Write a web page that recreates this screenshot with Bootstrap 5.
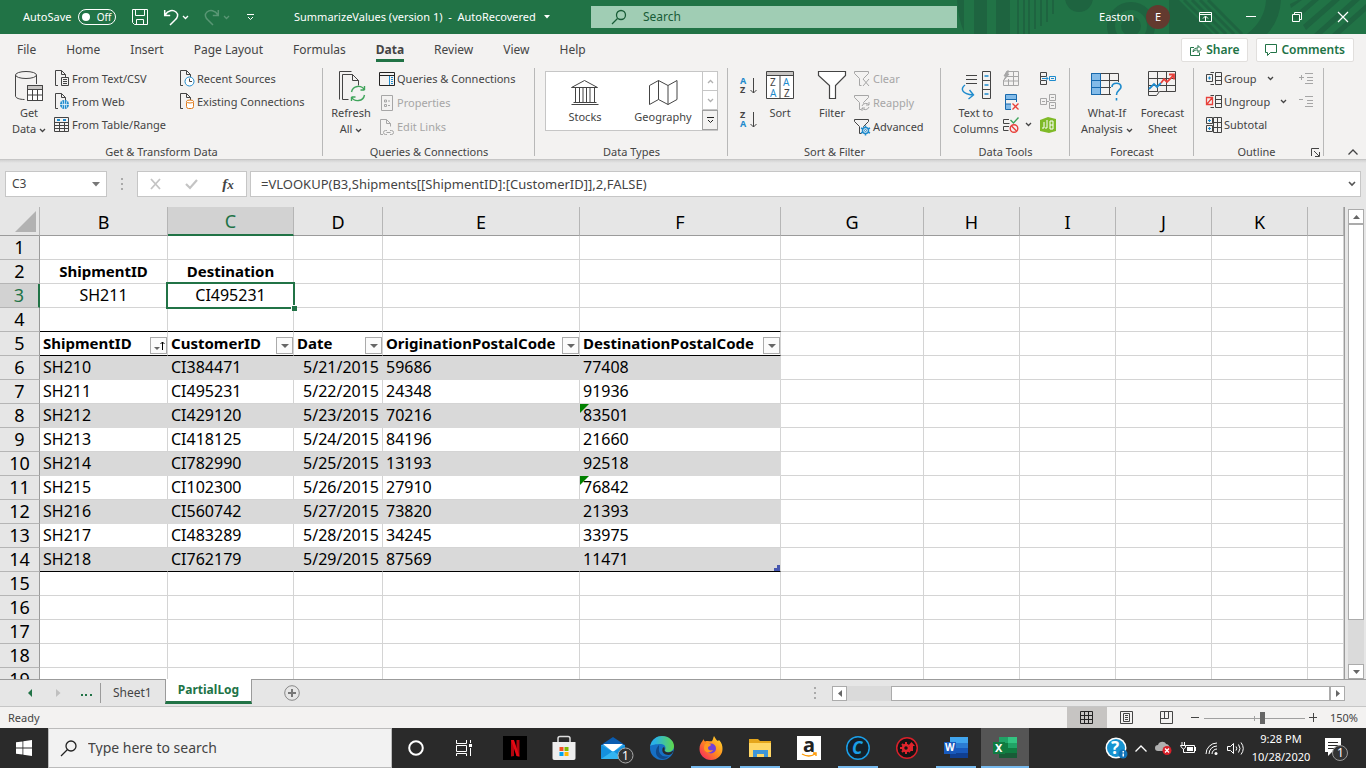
<!DOCTYPE html>
<html lang="en">
<head>
<meta charset="utf-8">
<meta name="viewport" content="width=device-width, initial-scale=1">
<title>SummarizeValues (version 1) - Excel</title>
<link href="https://cdn.jsdelivr.net/npm/bootstrap@5.3.0/dist/css/bootstrap.min.css" rel="stylesheet">
<style>
:root{--xl:#217346;--ink:#444;--dim:#a6a6a6;--blue:#1e8bcd}
body{font-family:"Noto Sans","Open Sans",sans-serif;font-size:11px;line-height:16px;color:var(--ink);background:#e6e6e6}
body>*{flex:none}
button{font:inherit;color:inherit;background:none;border:0;padding:0}
svg{display:block;flex:none;overflow:visible}
.ln{fill:none;stroke:currentColor}
/* title bar */
.titlebar{height:34px;background:var(--xl);color:#fff;position:relative}
.titlebar>*{position:relative}
.titlebar>.deco{position:absolute;right:0;top:0;height:34px;width:426px;overflow:hidden}
.quick{width:294px;padding-left:23px}
.pill{width:38px;height:16px;border:1px solid #fff;border-radius:8px;font-size:10px;line-height:14px;padding:0 4px 0 3px;margin-left:7px}
.pill i{width:8px;height:8px;border-radius:50%;background:#fff}
.doc{width:297px}
.find{flex:0 1 366px;height:22px;background:#a0cdb4;color:#185c37}
.find input{background:none;border:0;outline:0;font-size:12px;color:#185c37;width:100%;padding:0}
.find input::placeholder{color:#185c37;opacity:1}
.avatar{width:24px;height:24px;border-radius:50%;background:#633a2f;font-size:11px}
.win{width:46px;height:34px}
/* ribbon */
.ribbon{background:#f3f2f1}
.tabs{height:32px;font-size:12px;padding-left:17px;padding-right:12px}
.tabs a{color:var(--ink);text-decoration:none;height:28px;line-height:31px;white-space:nowrap;margin-right:30px}
.tabs a.on{font-weight:700;border-bottom:3px solid var(--xl)}
.share{height:24px;background:#fff;border:1px solid #e1dfdd;border-radius:2px;color:var(--xl);font-weight:600;font-size:12px;padding:0 8px}
.tools{height:94px;border-bottom:1px solid #c6c6c6}
.grp{position:relative;height:94px;flex:none}
.grp::after{content:"";position:absolute;right:0;top:2px;height:88px;width:1px;background:#b8b8b8}
.grp>.body{height:78px;padding-top:1px}
.g1{width:323px}.g2{width:212px}.g3{width:193px}.g4{width:213px}.g5{width:129px}.g6{width:124px}.g7{width:130px}
.g6>.body{padding-left:11px}
.big{padding-top:3px;white-space:nowrap;text-align:center;align-self:flex-start}
.big svg{margin:0 auto 2px}
.getdata{width:54px;padding-left:4px}.refresh{width:56px}.source{width:126px}
.r23>*{height:23px}.r24>*{height:24px}
.lab{display:flex;align-items:center;gap:2px;white-space:nowrap}
.off{color:var(--dim)}
.big svg.chev{display:inline-block;margin:0}
.flip{transform:scaleY(-1)}
.detail{margin-right:11px}
.gallery{width:173px;height:60px;border:1px solid #c6c6c6;background:#fff}
.gallery .kind{flex:1 1 0}
.gallery .spin{width:15px;border-left:1px solid #c6c6c6}
.spin button{height:19px;border-bottom:1px solid #c6c6c6;color:#b0b0b0}
.spin button:last-child{height:20px;border:1px solid #a0a0a0;margin:0 -1px -1px;background:#f3f2f1;color:#222}
/* formula bar */
.fbar{height:47px;background:linear-gradient(#d2d2d2,#e6e6e6 3px);padding:11px 5px 10px}
.fbox{background:#fff;border:1px solid #c6c6c6;height:26px}
.fbox input{border:0;outline:0;background:none;color:var(--ink);width:100%;padding:0;font-size:12px}
.namebox{width:102px;padding:0 6px}.fbtns{width:110px;margin-right:3px}
.fdots{margin:0 14px}
.formula input{font-size:13px;padding-left:10px}
.fx{font:italic 700 15px "Liberation Serif",serif}
/* sheet */
.sheet{flex:1 1 0;overflow:hidden;min-height:0}
.pane{overflow:hidden;min-width:0;background:#fff;border-right:1px solid #9b9b9b}
.cells{table-layout:fixed;width:100%;border-collapse:separate;border-spacing:0;color:#000;font-size:15px}
.c0{width:40px}.c1{width:128px}.c2{width:126px}.c3{width:89px}.c4{width:197px}.c5{width:201px}.c6{width:143px}.c7{width:96px}
.cells td,.cells th{height:24px;line-height:23px;padding:0 3px;border:0 solid #d4d4d4;border-width:0 1px 1px 0;white-space:nowrap;position:relative}
.cells td:not(.fw-bold){font-size:16px}
.cells thead th{height:29px;line-height:26px;background:#e6e6e6;border-color:#b5b5b5;border-bottom-color:#9b9b9b;text-align:center;font-size:18px;font-weight:400;padding-top:1px}
.cells tbody th[scope=row]{background:#e6e6e6;border-color:#b5b5b5;border-right-color:#9b9b9b;text-align:center;font-size:18px;font-weight:400;padding:0}
.cells thead th.sel{background:#d2d2d2;color:var(--xl);border-bottom:2px solid var(--xl)}
.cells tbody th.sel{background:#d2d2d2;color:var(--xl);border-right:2px solid var(--xl)}
.corner{position:absolute;right:3px;bottom:3px;width:21px;height:21px;background:#b2b2b2;clip-path:polygon(100% 0,100% 100%,0 100%)}
.cells tr.above td:nth-child(-n+6),.cells tr.hd th:not([scope=row]),.cells tr.end td:nth-child(-n+6){border-bottom-color:#000}
.cells tr.band td:nth-child(-n+6){background:#d9d9d9;border-right-color:#d9d9d9}
.cells tr.band:not(.end) td:nth-child(-n+6){border-bottom-color:#d9d9d9}
.cells tr.hd th{text-align:left}
.cells td:nth-child(4){text-align:right}
.pick{position:absolute;z-index:1;left:-2px;top:-2px;right:-2px;bottom:-2px;border:2px solid var(--xl)}
.pick::after{content:"";position:absolute;right:-4px;bottom:-4px;width:6px;height:6px;background:var(--xl);border:solid #fff;border-width:1px 0 0 1px}
.drop{position:absolute;right:0;bottom:1px;width:17px;height:17px;border:1px solid #ababab;background:#fbfbfb}
.drop::after{content:"";position:absolute;left:4px;top:6px;border:4px solid transparent;border-top-color:#666;border-bottom:0}
.drop.up::after{left:3px;top:9px;border-width:3px;border-bottom:0}
.drop svg{position:absolute;left:9px;top:3px}
.err::before{content:"";position:absolute;left:0;top:0;border-top:9px solid #008000;border-right:9px solid transparent}
.grip{position:absolute;right:0;bottom:0;width:6px;height:6px;background:#4858b0;clip-path:polygon(50% 0,100% 0,100% 100%,0 100%,0 50%,50% 50%)}
.vs{width:21px;padding:2px 2px 0 3px}
.sb{width:15px;height:15px;background:#fff;border:1px solid #ababab;color:#666;flex:none}
.vs .sb{width:16px}
.thumb{background:#fff;border:1px solid #ababab}
.vs .thumb{flex:0 1 396px}
.track{background:#dadada}
.sheettabs{height:28px;border-top:1px solid #9b9b9b;border-bottom:1px solid #c6c6c6;font-size:12px}
.tabnav{width:165px}
.rule{width:1px;height:20px;background:#9b9b9b;margin:0 12px 0 8px}
.now{margin-top:-1px;width:87px;height:25px;background:#fff;border:solid #9b9b9b;border-width:0 1px;border-bottom:3px solid var(--xl);color:var(--xl);font-weight:700}
.hs{width:513px;margin-right:21px}
.hs .track{width:44px}
.status{height:21px;background:#f3f2f1;padding-left:8px;padding-right:8px}
.view{width:40px;height:21px}.view.cur{background:#c6c4c2;color:#222}
.zoomer{width:101px;height:12px;margin:0 0 0 4px;appearance:none;background:linear-gradient(#a0a0a0,#a0a0a0) 0 6px/100% 1px no-repeat,linear-gradient(#a0a0a0,#a0a0a0) 50px 4px/1px 5px no-repeat}
.zoomer::-webkit-slider-thumb{appearance:none;width:5px;height:12px;background:#666;border:0}
/* taskbar */
.taskbar{height:40px;background:#2a2a2a;color:#fff}
.start{width:48px}
.tsearch{flex:0 1 344px;background:#f2f2f2;border:1px solid #bbb;color:#222;padding-left:11px;gap:11px}
.tsearch input{border:0;background:none;outline:0;font-size:14px;color:#444;padding:0;width:100%}
.tsearch input::placeholder{color:#444;opacity:1}
.app{width:48px;margin-right:1px;position:relative}
.app.first{margin-left:3px}
.app.run::after{content:"";position:absolute;left:4px;right:4px;bottom:0;height:2px;background:#76b9ed}
.app.front{background:#555}
.app.front::after{left:0;right:0}
.clock{line-height:18px;text-align:center;width:66px}
</style>
</head>
<body class="vh-100 d-flex flex-column overflow-hidden">
<svg width="0" height="0" class="position-absolute" aria-hidden="true">
<symbol id="page" viewBox="0 0 16 17"><path d="M4 15.500H1.500V.500h6l4 4v3M7.500.500v4h4" fill="none" stroke="currentColor"/></symbol>
<symbol id="chev" viewBox="0 0 7 5"><path d="M1 1l2.500 2.500L6 1" fill="none" stroke="currentColor" stroke-width="1.300"/></symbol>
<symbol id="funnel" viewBox="0 0 16 16"><path d="M.500.500h14v2l-5 5v1M.500 2.500l5 5v7h2M.500.500v2" fill="none" stroke="currentColor"/></symbol>
</svg>

<header class="titlebar d-flex align-items-center">
  <svg class="deco" viewBox="0 0 426 34" fill="#1e6440" aria-hidden="true"><path d="M17 0h7v32Q18 18 17 0zM34 0h13v34H34zM56 0h14v34H56zM77 0h2v34h-2zM83 0h2v34h-2zM88 0h2v34h-2zM94 0h2v29h-2zM100 0h2v26h-2zM106 0h2v22h-2zM112 0h2v14h-2z"/><circle cx="139" cy="-2" r="14"/><circle cx="191" cy="26" r="20" fill="none" stroke="#1e6440" stroke-width="8"/><circle cx="191" cy="26" r="10"/><path d="M229 0h10l34 34h-44zM326 0h15q-1 20-14 34h-20q18-14 19-34zM350 4l8-4h4l-11 8zM353 16L372 0h7l-23 20zM363 25L392 0h8l-34 30zM374 34l38-34h8l-38 34zM392 34l34-30v7l-26 23z"/><path d="M244 0l34 34M252 0l34 34M260 0l34 34M268 0l34 34" stroke="#1e6440" stroke-width="3"/></svg>
  <div class="quick d-flex align-items-center">
    <span>AutoSave</span>
    <button class="pill d-flex align-items-center justify-content-between text-white" aria-label="AutoSave off"><i></i>Off</button>
    <button class="ms-3" aria-label="Save"><svg width="16" height="16" class="ln"><path d="M.500.500h15v15h-13l-2-2zM3.500.500v6h9v-6M4.500 15.500v-5h7v5"/></svg></button>
    <button class="ms-3" aria-label="Undo"><svg width="14" height="16" class="ln" stroke-width="1.500"><path d="M.700 1v5.500h5.500M1 6C4 1 9 .500 12 3s1.500 6-1 8l-5 5"/></svg></button>
    <svg class="ms-1" width="7" height="5"><use href="#chev"/></svg>
    <button class="ms-3 opacity-25" aria-label="Redo"><svg width="14" height="16" class="ln" stroke-width="1.500"><path d="M13.300 1v5.500H7.800M13 6C10 1 5 .500 2 3s-1.500 6 1 8l5 5"/></svg></button>
    <svg class="ms-1 opacity-25" width="7" height="5"><use href="#chev"/></svg>
    <button class="ms-3" aria-label="Customize"><svg width="9" height="8" class="ln"><path d="M1 1.500h7M2 4l2.500 2.500L7 4"/></svg></button>
  </div>
  <div class="doc d-flex align-items-center text-nowrap"><span>SummarizeValues (version 1) &nbsp;-&nbsp; AutoRecovered</span><svg class="ms-2" width="6" height="4"><path d="M0 0h6L3 3.500z" fill="#fff"/></svg></div>
  <label class="find d-flex align-items-center ps-3"><svg width="16" height="16" class="ln me-3 ms-1" stroke-width="1.300"><circle cx="10" cy="6" r="4.500"/><path d="M6.500 9.500L1 15"/></svg><input type="text" placeholder="Search" aria-label="Search"></label>
  <span class="ms-auto me-2 pe-1">Easton</span>
  <span class="avatar d-flex align-items-center justify-content-center me-2">E</span>
  <div class="d-flex ps-1">
    <button class="win d-flex align-items-center justify-content-center" aria-label="Ribbon display"><svg width="13" height="11" class="ln"><path d="M.500.500h12v9H.500zM.500 2.500h12M6.500 9V4.500M4 6.500l2.500-2.500L9 6.500"/></svg></button>
    <button class="win d-flex align-items-center justify-content-center" aria-label="Minimize"><svg width="10" height="2"><path d="M0 0h10v1H0z" fill="#fff"/></svg></button>
    <button class="win d-flex align-items-center justify-content-center" aria-label="Restore"><svg width="10" height="10" class="ln"><path d="M.500 2.500h7v7h-7zM2.500 2.500v-2h7v7h-2"/></svg></button>
    <button class="win d-flex align-items-center justify-content-center" aria-label="Close"><svg width="10" height="10" class="ln" stroke-width="1.200"><path d="M0 0l10 10M10 0L0 10"/></svg></button>
  </div>
</header>

<section class="ribbon">
  <nav class="tabs d-flex align-items-start">
    <a href="#">File</a><a href="#">Home</a><a href="#">Insert</a><a href="#">Page Layout</a><a href="#">Formulas</a><a href="#" class="on">Data</a><a href="#">Review</a><a href="#">View</a><a href="#">Help</a>
    <div class="ms-auto d-flex gap-2 pt-1">
      <button class="share d-flex align-items-center gap-1"><svg width="12" height="12" class="ln"><path d="M4 3.500H.500v8h9v-3M3 8c0-3 2-4 5-4V1.500L11.500 5 8 8.500V6C6 6 4.500 6 3 8z"/></svg>Share</button>
      <button class="share d-flex align-items-center gap-1"><svg width="12" height="12" class="ln"><path d="M.500.500h11v8h-6l-3 3v-3h-2z"/></svg>Comments</button>
    </div>
  </nav>
  <div class="tools d-flex">
    <div class="grp g1"><div class="body d-flex">
      <button class="big getdata"><svg width="30" height="33" class="ln"><ellipse cx="12" cy="5" rx="10.500" ry="3.500"/><path d="M1.500 5v21c0 2 4 3.500 9 3.500M22.500 5v9"/><path d="M13.500 15.500h15v15h-15z" fill="#fff"/><path d="M14 16h14v3H14z" fill="#c8c6c4" stroke="none"/><path d="M13.500 15.500h15v15h-15zM13.500 19.500h15M13.500 25h15M18.500 19v11M23.500 19v11"/></svg>Get<br>Data <svg class="chev" width="7" height="5"><use href="#chev"/></svg></button>
      <div class="r23 source">
        <button class="lab"><svg width="16" height="17"><use href="#page" width="16" height="17"/><path class="ln" d="M7.500 7.500h7v8h-7z"/><path class="ln" d="M9 9.500h4M9 11.500h4M9 13.500h4"/></svg>From Text/CSV</button>
        <button class="lab"><svg width="16" height="17"><use href="#page" width="16" height="17"/><circle cx="10.500" cy="11.500" r="4.500" fill="#1e8bcd"/><path d="M6 11.500h9M10.500 7v9M8 8q2 3.500 0 7M13 8q-2 3.500 0 7" fill="none" stroke="#fff" stroke-width=".7"/></svg>From Web</button>
        <button class="lab"><svg width="16" height="16" class="ln"><path d="M.500.500h14v14H.500zM.500 5.500h14M.500 8.500h14M.500 11.500h14M5.500 5v9M10.500 5v9"/><path d="M3 3h3M9 3h3" stroke="#1e8bcd" stroke-width="2"/></svg>From Table/Range</button>
      </div>
      <div class="r23">
        <button class="lab"><svg width="15" height="17"><use href="#page" width="16" height="17" x="-1"/><circle cx="9.500" cy="11.500" r="4.500" fill="#fff" stroke="#1e8bcd"/><path d="M9.500 8.500v3h2.500" fill="none" stroke="#444"/></svg>Recent Sources</button>
        <button class="lab"><svg width="15" height="17"><use href="#page" width="16" height="17" x="-1"/><rect x="6.500" y="7.500" width="7" height="8" rx="2" fill="#fff" stroke="#e07b1a"/><ellipse cx="10" cy="8.500" rx="3.500" ry="1.500" fill="#fff" stroke="#e07b1a"/></svg>Existing Connections</button>
      </div>
    </div><div class="text-center">Get &amp; Transform Data</div></div>

    <div class="grp g2"><div class="body d-flex">
      <button class="big refresh"><svg width="30" height="33" class="ln"><path d="M3.500 29.500V1.500h12M6.500 29.500V4.500h10l6 6v5M16.500 4.500v6h6M6.500 29.500h6"/><path d="M15.500 22a7 7 0 0 1 13-2v-4M28.500 20h-4M28.500 25a7 7 0 0 1-13 2v4M15.500 27h4" stroke="#3fa45b" stroke-width="1.400"/></svg>Refresh<br>All <svg class="chev" width="7" height="5"><use href="#chev"/></svg></button>
      <div class="r24">
        <button class="lab"><svg width="16" height="14" class="ln"><path d="M.500.500h15v13H.500zM.500 3.500h15" stroke="#222"/><path d="M10.500 4v9M12 5.500h2M12 7.500h2M12 9.500h2M12 11.500h2" stroke="#1e8bcd"/></svg>Queries &amp; Connections</button>
        <button class="lab off"><svg width="16" height="16" class="ln"><path d="M2.500.500h11v15h-11zM5.500 5h2v2h-2zM5.500 9.500h2v2h-2zM9 6h2M9 10.500h2"/></svg>Properties</button>
        <button class="lab off"><svg width="16" height="17"><use href="#page" width="16" height="17"/><path class="ln" d="M8 11.500H6.500a2 2 0 0 0 0 4H8M11 11.500h1.500a2 2 0 0 1 0 4H11M7.500 13.500h4"/></svg>Edit Links</button>
      </div>
    </div><div class="text-center">Queries &amp; Connections</div></div>

    <div class="grp g3"><div class="body d-flex justify-content-center">
      <div class="gallery d-flex mt-1">
        <button class="kind d-flex flex-column align-items-center pt-2"><svg width="28" height="25" class="ln mb-1"><path d="M.500 7.500L13.500.500l13 7zM.500 24.500h27M2.500 22.500h23M4.500 8v14M8.500 8v14M12 8v14M15.500 8v14M19 8v14M23.500 8v14"/></svg>Stocks</button>
        <button class="kind d-flex flex-column align-items-center pt-2"><svg width="29" height="25" class="ln mb-1"><path d="M.500 5.500l9-5 9.500 5 9-5v19l-9 5-9.500-5-9 5zM9.500.500v19M19 5.500v19"/></svg>Geography</button>
        <div class="spin d-flex flex-column">
          <button class="d-flex align-items-center justify-content-center" aria-label="Up"><svg width="7" height="5" class="flip"><use href="#chev"/></svg></button>
          <button class="d-flex align-items-center justify-content-center" aria-label="Down"><svg width="7" height="5"><use href="#chev"/></svg></button>
          <button class="d-flex align-items-center justify-content-center" aria-label="More"><svg width="9" height="7" class="ln"><path d="M1 .500h7M2 3l2.500 2.500L7 3"/></svg></button>
        </div>
      </div>
    </div><div class="text-center">Data Types</div></div>

    <div class="grp g4"><div class="body d-flex">
      <div class="d-flex flex-column gap-3 ps-2 pt-2 ms-1">
        <button aria-label="Sort A to Z"><svg width="18" height="18" font-size="9" font-weight="700"><text x="0" y="9" fill="#1e8bcd">A</text><text x="0" y="18" fill="#444">Z</text><path class="ln" d="M13.500 3v15M10.500 15l3 3 3-3"/></svg></button>
        <button aria-label="Sort Z to A"><svg width="18" height="18" font-size="9" font-weight="700"><text x="0" y="9" fill="#444">Z</text><text x="0" y="18" fill="#1e8bcd">A</text><path class="ln" d="M13.500 3v15M10.500 15l3 3 3-3"/></svg></button>
      </div>
      <button class="big ms-2"><svg width="28" height="33" font-size="10"><path d="M.500 1.500h27v27H.500z" fill="#fff" stroke="#444"/><path d="M1 2h26v3H1z" fill="#c8c6c4"/><path class="ln" d="M.500 5.500h27M14 5v23"/><text x="4" y="16" fill="#444">Z</text><text x="4" y="27" fill="#1e8bcd">A</text><text x="17" y="16" fill="#1e8bcd">A</text><text x="18" y="27" fill="#444">Z</text></svg>Sort</button>
      <button class="big ms-4"><svg width="28" height="33"><path d="M.500 1.500h27v4l-10 10v13h-6v-13l-11-10z" fill="#fff" stroke="#444" stroke-width="1.200"/></svg>Filter</button>
      <div class="r24 ms-2">
        <button class="lab off"><svg width="17" height="16"><use href="#funnel" width="16" height="16"/><path class="ln" d="M9 8l6 7M15 8l-6 7"/></svg>Clear</button>
        <button class="lab off"><svg width="17" height="16"><use href="#funnel" width="16" height="16"/><path class="ln" d="M8 11a4 4 0 0 1 7-1V7M15 10h-3M15 12a4 4 0 0 1-7 1v3M8 13h3"/></svg>Reapply</button>
        <button class="lab"><svg width="17" height="16"><use href="#funnel" width="16" height="16"/><g fill="none" stroke="#1e8bcd"><circle cx="11.500" cy="11.500" r="3" stroke-width="1.500"/><path d="M11.500 6.500v2M11.500 14.500v2M7 9l2 1M14 13l2 1M7 14l2-1M14 10l2-1" stroke-width="1.500"/><circle cx="11.500" cy="11.500" r="1"/></g></svg>Advanced</button>
      </div>
    </div><div class="text-center">Sort &amp; Filter</div></div>

    <div class="grp g5"><div class="body d-flex">
      <button class="big ms-2 ps-1"><svg width="32" height="33" class="ln"><path d="M6 5.500h11M6 9.500h11M6 13.500h11"/><path d="M22.500 1.500h8v27h-8zM22.500 10.500h8M22.500 19.500h8"/><path d="M5 15c-5 4-3 9 8 10M9.500 20l4 5-5 4M24.500 6h4M24.500 15h4M24.500 24h4" stroke="#1e8bcd" stroke-width="1.400"/></svg>Text to<br>Columns</button>
      <div class="r23 ms-1">
        <button class="lab off" aria-label="Flash Fill"><svg width="16" height="15" class="ln"><path d="M6 .500h9.500v14H.500V9M4 5.500h11.500M.500 10h15M5.500 8v6M10.500.500v14"/><path d="M4 0L1 5h2L1 9l5-6H4l2-3z" fill="#a6a6a6"/></svg></button>
        <button class="lab" aria-label="Remove Duplicates"><svg width="16" height="16"><path d="M2 1h11v5H2zM2 10h6v5H2z" fill="#83bbe8"/><path d="M2.500.500h11v15h-11zM2.500 5.500h11M2.500 10h8" fill="none" stroke="#1769ad"/><path d="M8 8h8v8H8z" fill="#f3f2f1"/><path d="M9.500 9.500l6 6M15.500 9.500l-6 6" stroke="#e8403a" stroke-width="1.300"/></svg></button>
        <button class="lab" aria-label="Data Validation"><svg width="16" height="16"><path class="ln" d="M6 2.500H.500v4h6M6 9.500H.500v4h5"/><path d="M7.500 3l3 3L15.500.500" fill="none" stroke="#3fa45b" stroke-width="1.400"/><g fill="none" stroke="#e8403a" stroke-width="1.400"><circle cx="11" cy="11.500" r="3.800"/><path d="M8.500 9l5 5"/></g></svg><svg class="ms-1" width="7" height="5"><use href="#chev"/></svg></button>
      </div>
      <div class="r23 ms-2">
        <button class="lab" aria-label="Consolidate"><svg width="16" height="13" class="ln"><path d="M.500.500h6v4h-6zM.500 8.500h6v4h-6zM.500 4v4"/><path d="M2 6.500h6M6 4.500l2 2-2 2M9.500 4.500h6v4h-6zM11 6.500h3" stroke="#1e8bcd"/></svg></button>
        <button class="lab off" aria-label="Relationships"><svg width="16" height="15" class="ln"><path d="M.500 4.500h6v6h-6zM9.500.500h6v6h-6zM9.500 8.500h6v6h-6zM7 7.500h2M2 7.500h3M11 3.500h3M11 11.500h3"/></svg></button>
        <button class="lab" aria-label="Data Model"><svg width="16" height="16"><path d="M0 3l8-3 8 2v12l-7 2-9-2z" fill="#7fba28"/><path d="M4 5v6M4 11H2M7 3v8H5M10 4h3v8h-3zM10 8h3" fill="none" stroke="#fff"/></svg></button>
      </div>
    </div><div class="text-center">Data Tools</div></div>

    <div class="grp g6"><div class="body d-flex">
      <button class="big"><svg width="31" height="33"><path d="M1 4h9v20H1z" fill="#83bbe8"/><path class="ln" d="M.500 3.500h27v21H.500zM.500 10.500h27M.500 17.500h27M9.500 3.500v21M18.500 3.500v21"/><path d="M.500 3.500h9v21h-9zM.500 10.500h9M.500 17.500h9" fill="none" stroke="#1769ad"/><path d="M20 12h11v20H20z" fill="#f3f2f1"/><path d="M21 17c0-5 9-5 9 0 0 3-4.500 3-4.500 8M25.500 28v2.500" fill="none" stroke="#1e8bcd" stroke-width="1.600"/></svg>What-If<br>Analysis <svg class="chev" width="7" height="5"><use href="#chev"/></svg></button>
      <button class="big ms-2"><svg width="28" height="33"><path class="ln" d="M.500 1.500h27v20h-16l-3 4h-8zM.500 21.500h10M.500 8.500h27M.500 15.500h27M9.500 1.500v20M18.500 1.500v20"/><path d="M1 19l5-5 3 3 4-4" fill="none" stroke="#1e8bcd" stroke-width="1.800"/><path d="M13 13l3-4 3 3 7-7M21 4.500h5v5" fill="none" stroke="#e8403a" stroke-width="1.800"/></svg>Forecast<br>Sheet</button>
    </div><div class="text-center">Forecast</div></div>

    <div class="grp g7"><div class="body d-flex ps-2 ms-1">
      <div class="r23">
        <button class="lab"><svg width="16" height="13" class="ln"><path d="M8 .500H4.500M4.500 12.500H8M.500 2.500h6v7h-6zM9.500.500h6v12h-6zM9.500 4.500h6M9.500 8.500h6"/><path d="M2 6h3M3.500 4.500v3" stroke="#1e8bcd"/></svg>Group <svg class="ms-2" width="7" height="5"><use href="#chev"/></svg></button>
        <button class="lab"><svg width="16" height="13" class="ln"><path d="M8 .500H4.500M4.500 12.500H8M9.500.500h6v12h-6zM9.500 4.500h6M9.500 8.500h6"/><path d="M.500 2.500h6v7h-6zM1 9l5-6" stroke="#e8403a" stroke-width="1.300"/></svg>Ungroup <svg class="ms-2" width="7" height="5"><use href="#chev"/></svg></button>
        <button class="lab"><svg width="16" height="16" class="ln"><path d="M.500.500h6v6h-6zM.500 8.500h6v6h-6zM7.500.500h8v15h-8zM7.500 5.500h8M7.500 10.500h8M11.500.500v15"/><path d="M2 3.500h3M3.500 2v3M2 11.500h3M3.500 10v3" stroke="#1e8bcd"/></svg>Subtotal</button>
      </div>
      <div class="r23 ms-auto detail">
        <button class="lab off" aria-label="Show Detail"><svg width="14" height="11" class="ln"><path d="M0 4.500h5M2.500 2v5M6 .500h8M8 4.500h6M8 7.500h6M6 10.500h8"/></svg></button>
        <button class="lab off" aria-label="Hide Detail"><svg width="14" height="11" class="ln"><path d="M0 3.500h4M6 .500h8M8 4.500h6M8 7.500h6M6 10.500h8"/></svg></button>
      </div>
    </div><div class="d-flex"><span class="ms-auto ps-2">Outline</span><button class="ms-auto me-1" aria-label="Outline settings"><svg width="9" height="9" class="ln"><path d="M.500 8V.500H8M3 3l5 5M8.500 4v4.500H4"/></svg></button></div></div>
    <button class="ms-auto align-self-end pb-1 pe-2" aria-label="Collapse ribbon"><svg width="10" height="6" class="ln" stroke-width="1.300"><path d="M.500 5.500l4.500-4.500 4.500 4.500"/></svg></button>
  </div>
</section>

<section class="fbar d-flex">
  <div class="fbox namebox d-flex align-items-center"><input type="text" value="C3" aria-label="Name box"><svg width="8" height="5"><path d="M0 0h8L4 4.500z" fill="#777"/></svg></div>
  <svg class="fdots align-self-center" width="2" height="12"><path d="M0 0h2v2H0zM0 5h2v2H0zM0 10h2v2H0z" fill="#aaa"/></svg>
  <div class="fbox fbtns d-flex align-items-center justify-content-around">
    <button aria-label="Cancel"><svg width="11" height="10"><path d="M1 0l9 10M10 0L1 10" stroke="#c4c4c4" stroke-width="1.800"/></svg></button>
    <button aria-label="Enter"><svg width="13" height="10"><path d="M1 5l4 4 7-8" fill="none" stroke="#c4c4c4" stroke-width="2.200"/></svg></button>
    <button aria-label="Insert function" class="fx">f<small>x</small></button>
  </div>
  <div class="fbox formula flex-fill d-flex align-items-center pe-1"><input type="text" value="=VLOOKUP(B3,Shipments[[ShipmentID]:[CustomerID]],2,FALSE)" aria-label="Formula"><svg width="8" height="6"><path d="M1 1l3 3 3-3" fill="none" stroke="#555" stroke-width="1.600"/></svg></div>
</section>

<main class="sheet d-flex">
  <div class="pane flex-fill">
  <table class="cells">
    <colgroup><col class="c0"><col class="c1"><col class="c2"><col class="c3"><col class="c4"><col class="c5"><col class="c6"><col class="c7"><col class="c7"><col class="c7"><col class="c7"><col></colgroup>
    <thead><tr><th><span class="corner"></span></th><th>B</th><th class="sel">C</th><th>D</th><th>E</th><th>F</th><th>G</th><th>H</th><th>I</th><th>J</th><th>K</th><th></th></tr></thead>
    <tbody>
    <tr><th scope="row">1</th><td><td><td><td><td><td><td><td><td><td><td></tr>
    <tr><th scope="row">2</th><td class="text-center fw-bold">ShipmentID</td><td class="text-center fw-bold">Destination</td><td><td><td><td><td><td><td><td><td></tr>
    <tr><th scope="row" class="sel">3</th><td class="text-center">SH211</td><td class="text-center">CI495231<span class="pick"></span></td><td><td><td><td><td><td><td><td><td></tr>
    <tr class="above"><th scope="row">4</th><td><td><td><td><td><td><td><td><td><td><td></tr>
    <tr class="hd"><th scope="row" class="text-center">5</th><th>ShipmentID<button class="drop up" aria-label="Sorted ascending"><svg width="5" height="9" class="ln"><path d="M2.500 9V1M.500 3l2-2 2 2"/></svg></button></th><th>CustomerID<button class="drop" aria-label="Filter"></button></th><th>Date<button class="drop" aria-label="Filter"></button></th><th>OriginationPostalCode<button class="drop" aria-label="Filter"></button></th><th>DestinationPostalCode<button class="drop" aria-label="Filter"></button></th><td><td><td><td><td><td></tr>
    <tr class="band"><th scope="row">6</th><td>SH210</td><td>CI384471</td><td>5/21/2015</td><td>59686</td><td>77408</td><td><td><td><td><td><td></tr>
    <tr><th scope="row">7</th><td>SH211</td><td>CI495231</td><td>5/22/2015</td><td>24348</td><td>91936</td><td><td><td><td><td><td></tr>
    <tr class="band"><th scope="row">8</th><td>SH212</td><td>CI429120</td><td>5/23/2015</td><td>70216</td><td class="err">83501</td><td><td><td><td><td><td></tr>
    <tr><th scope="row">9</th><td>SH213</td><td>CI418125</td><td>5/24/2015</td><td>84196</td><td>21660</td><td><td><td><td><td><td></tr>
    <tr class="band"><th scope="row">10</th><td>SH214</td><td>CI782990</td><td>5/25/2015</td><td>13193</td><td>92518</td><td><td><td><td><td><td></tr>
    <tr><th scope="row">11</th><td>SH215</td><td>CI102300</td><td>5/26/2015</td><td>27910</td><td class="err">76842</td><td><td><td><td><td><td></tr>
    <tr class="band"><th scope="row">12</th><td>SH216</td><td>CI560742</td><td>5/27/2015</td><td>73820</td><td>21393</td><td><td><td><td><td><td></tr>
    <tr><th scope="row">13</th><td>SH217</td><td>CI483289</td><td>5/28/2015</td><td>34245</td><td>33975</td><td><td><td><td><td><td></tr>
    <tr class="band end"><th scope="row">14</th><td>SH218</td><td>CI762179</td><td>5/29/2015</td><td>87569</td><td>11471<span class="grip"></span></td><td><td><td><td><td><td></tr>
    <tr><th scope="row">15</th><td><td><td><td><td><td><td><td><td><td><td></tr>
    <tr><th scope="row">16</th><td><td><td><td><td><td><td><td><td><td><td></tr>
    <tr><th scope="row">17</th><td><td><td><td><td><td><td><td><td><td><td></tr>
    <tr><th scope="row">18</th><td><td><td><td><td><td><td><td><td><td><td></tr>
    <tr><th scope="row">19</th><td><td><td><td><td><td><td><td><td><td><td></tr>
    </tbody>
  </table>
  </div>
  <div class="vs d-flex flex-column">
    <button class="sb d-flex align-items-center justify-content-center" aria-label="Scroll up"><svg width="7" height="4"><path d="M0 4h7L3.500 0z" fill="#666"/></svg></button>
    <div class="thumb"></div>
    <div class="track flex-fill"></div>
    <button class="sb d-flex align-items-center justify-content-center" aria-label="Scroll down"><svg width="7" height="4"><path d="M0 0h7L3.500 4z" fill="#666"/></svg></button>
  </div>
</main>

<section class="sheettabs d-flex align-items-start">
  <div class="tabnav d-flex align-items-center h-100">
    <button class="ps-4 ms-1" aria-label="Previous sheet"><svg width="4" height="8"><path d="M4 0v8L0 4z" fill="#217346"/></svg></button>
    <button class="ps-4" aria-label="Next sheet"><svg width="5" height="8"><path d="M0 0v8l4.500-4z" fill="#c0c0c0"/></svg></button>
    <button class="ps-3 ms-1 d-flex" aria-label="More sheets"><svg width="11" height="8"><path d="M0 5h2v2H0zM4 5h2v2H4zM9 5h2v2H9z" fill="#217346"/></svg></button>
    <span class="rule"></span>
    <button>Sheet1</button>
  </div>
  <button class="now">PartialLog</button>
  <button class="align-self-center ms-4" aria-label="New sheet"><svg class="ms-2" width="16" height="16"><circle cx="8" cy="8" r="7.300" fill="none" stroke="#888"/><path d="M4 8h8M8 4v8" stroke="#777" stroke-width="2"/></svg></button>
  <svg class="ms-auto me-3 align-self-center" width="2" height="12"><path d="M0 0h2v2H0zM0 5h2v2H0zM0 10h2v2H0z" fill="#aaa"/></svg>
  <div class="hs d-flex align-self-center">
    <button class="sb d-flex align-items-center justify-content-center" aria-label="Scroll left"><svg width="4" height="7"><path d="M4 0v7L0 3.500z" fill="#666"/></svg></button>
    <div class="track"></div>
    <div class="thumb flex-fill"></div>
    <button class="sb d-flex align-items-center justify-content-center" aria-label="Scroll right"><svg width="4" height="7"><path d="M0 0v7l4-3.500z" fill="#666"/></svg></button>
  </div>
</section>

<footer class="status d-flex align-items-center">
  <span class="me-auto">Ready</span>
  <button class="view cur d-flex align-items-center justify-content-center" aria-label="Normal view"><svg width="13" height="13" class="ln"><path d="M.500.500h12v12H.500zM.500 4.500h12M.500 8.500h12M4.500.500v12M8.500.500v12"/></svg></button>
  <button class="view d-flex align-items-center justify-content-center" aria-label="Page layout view"><svg width="13" height="13" class="ln"><path d="M.500.500h12v12H.500zM3.500 2.500h6v8h-6zM5 4.500h3M5 6.500h3M5 8.500h3"/></svg></button>
  <button class="view d-flex align-items-center justify-content-center" aria-label="Page break view"><svg width="13" height="13" class="ln"><path d="M.500 12.500V.500h12v12zM.500 7.500h8v-7M4.500.500v7"/></svg></button>
  <button class="ms-1" aria-label="Zoom out"><svg width="9" height="9" class="ln"><path d="M0 4.500h8"/></svg></button>
  <input class="zoomer" type="range" min="0" max="100" value="58" aria-label="Zoom">
  <button class="me-2 ps-1" aria-label="Zoom in"><svg width="9" height="9" class="ln"><path d="M0 4.500h8M4.500 0v9"/></svg></button>
  <span class="ps-1">150%</span>
</footer>

<nav class="taskbar d-flex">
  <button class="start d-flex align-items-center justify-content-center" aria-label="Start"><svg width="16" height="16" fill="#fff"><path d="M0 2.300L6.500 1.400v6.200H0zM7.300 1.300L16 0v7.600H7.300zM0 8.400h6.500v6.200L0 13.700zM7.300 8.400H16V16l-8.700-1.300z"/></svg></button>
  <label class="tsearch d-flex align-items-center"><svg width="17" height="17" class="ln" stroke-width="1.300"><circle cx="11" cy="6" r="5"/><path d="M7.500 9.500L1 16"/></svg><input type="text" placeholder="Type here to search" aria-label="Type here to search"></label>
  <button class="app me-0 d-flex align-items-center justify-content-center" aria-label="Cortana"><svg width="16" height="16"><circle cx="8" cy="8" r="6.800" fill="none" stroke="#fff" stroke-width="2"/></svg></button>
  <button class="app me-0 d-flex align-items-center justify-content-center" aria-label="Task View"><svg width="16" height="16" class="ln"><path d="M.500 0v3.500h10V0M.500 5.500h10v6h-10zM.500 16v-2.500h10V16M14.500 0v3M14.500 8v8"/><path d="M13 4h3v3h-3z" fill="#fff" stroke="none"/></svg></button>
  <button class="app first d-flex align-items-center justify-content-center" aria-label="Netflix"><svg width="24" height="24"><path d="M0 0h24v24H0z" fill="#000"/><path d="M8 4h3v16l-3 .500zM13.500 4h3v16.500l-3-.500z" fill="#b1060f"/><path d="M8 4h3l5.500 16.500-3-.500z" fill="#e50914"/></svg></button>
  <button class="app d-flex align-items-center justify-content-center" aria-label="Store"><svg width="24" height="24"><path d="M6 7V2.500C6 1 7 .500 8 .500h8c1 0 2 .500 2 2V7" fill="none" stroke="#ddd" stroke-width="1.500"/><path d="M.500 6h23v16c0 1-.500 2-2 2h-19c-1.500 0-2-1-2-2z" fill="#eee"/><path d="M7.500 11h4v4h-4z" fill="#f25022"/><path d="M12.500 11h4v4h-4z" fill="#7fba00"/><path d="M7.500 16h4v4h-4z" fill="#00a4ef"/><path d="M12.500 16h4v4h-4z" fill="#ffb900"/></svg></button>
  <button class="app d-flex align-items-center justify-content-center" aria-label="Mail"><svg width="24" height="24"><path d="M0 9L12 1l12 8z" fill="#0a5cb0"/><path d="M0 9h24v14H0z" fill="#2fa8ea"/><path d="M2 8h20L12 16z" fill="#fff"/><path d="M0 9l12 7L24 9v14H0z" fill="#1490df"/><path d="M0 23l12-8 12 8z" fill="#33b4f2"/><circle cx="24.500" cy="19.500" r="7.500" fill="#333" stroke="#aaa"/><text x="21" y="24" font-size="12" fill="#fff">1</text></svg></button>
  <button class="app d-flex align-items-center justify-content-center" aria-label="Edge"><svg width="24" height="24"><defs><linearGradient id="e1"><stop offset=".2" stop-color="#2ab2e6"/><stop offset="1" stop-color="#5fd84a"/></linearGradient></defs><circle cx="12" cy="12" r="12" fill="#1670c5"/><path d="M.200 10C2 3 7 0 12 0c7 0 12 5 12 10 0 4-3 6-6 6-2 0-4-.500-3-2 1.500-2 0-6-4-6-5 0-10 1-10.800 2z" fill="url(#e1)"/><path d="M9 12c-1 6 4 10 10 8-3 4-9 4-12 0-2-4-1-8 2-11z" fill="#114a8b"/><path d="M14 11c1 1 .500 2.500.500 3.500.500 2 5 3 9 0-1 3-3 4.500-5 4.500-4 0-7-3-6-6 0-1 .500-1.500 1.500-2z" fill="#2a2a2a"/></svg></button>
  <button class="app run d-flex align-items-center justify-content-center" aria-label="Firefox"><svg width="24" height="24"><defs><linearGradient id="f1" x1="1" x2="0" y2="1"><stop offset="0" stop-color="#ffe030"/><stop offset=".5" stop-color="#ff8a1e"/><stop offset="1" stop-color="#f5156c"/></linearGradient></defs><path d="M15 0c2 3 2 4 4 5l1-1c3 3 3.500 6 3.500 9 0 6-5 11-11.500 11S.500 19 .500 13c0-4 1.500-6 3-8l1-2c0 1 1 2 1.500 2.500C9 4 12 6 13 5s1-3 2-5z" fill="url(#f1)"/><circle cx="12" cy="12.500" r="5" fill="#7340d8"/><path d="M6 8c3-2 6 0 6 1s-3 1-3 3 2 3 5 2c-2 4-9 3-9-2 0-2 .500-3 1-4z" fill="#ff9a20"/></svg></button>
  <button class="app run d-flex align-items-center justify-content-center" aria-label="File Explorer"><svg width="24" height="24"><path d="M1 3h9l2 2h11v16H1z" fill="#e5a61c"/><path d="M1 7h22v14H1z" fill="#ffd766"/><path d="M5 21v-7h15v7h-4v-3H9v3z" fill="#3f96d8"/></svg></button>
  <button class="app d-flex align-items-center justify-content-center" aria-label="Amazon"><svg width="24" height="24"><path d="M0 0h24v24H0z" fill="#fff"/><text x="6" y="16" font-size="20" font-weight="700" fill="#222">a</text><path d="M5 18q7 4 13 0M19 20v-3h-3" fill="none" stroke="#f90" stroke-width="1.400"/></svg></button>
  <button class="app run d-flex align-items-center justify-content-center" aria-label="CCleaner"><svg width="24" height="24"><circle cx="12" cy="12" r="11.200" fill="#14202a" stroke="#1a9fe8" stroke-width="1.500"/><text x="6" y="18" font-size="17" font-style="italic" font-weight="700" fill="#1a9fe8">C</text></svg></button>
  <button class="app d-flex align-items-center justify-content-center" aria-label="Driver Booster"><svg width="22" height="22"><circle cx="11" cy="11" r="10.300" fill="#141414" stroke="#d8202a" stroke-width="1.500"/><circle cx="10" cy="11" r="3" fill="none" stroke="#e0242c" stroke-width="2.500"/><path d="M10 5v3M10 14v3M4 11h3M6 7l2 2M6 15l2-2M12 13l2 2" stroke="#e0242c" stroke-width="2"/><path d="M12 9l3.500-4L19 9h-2v5h-3V9z" fill="#e0242c"/></svg></button>
  <button class="app run d-flex align-items-center justify-content-center" aria-label="Word"><svg width="24" height="24" font-size="10" font-weight="700"><path d="M6 1h18v6H6z" fill="#41a5ee"/><path d="M6 7h18v5H6z" fill="#2b7cd3"/><path d="M6 12h18v5H6z" fill="#185abd"/><path d="M6 17h18v5H6z" fill="#103f91"/><path d="M0 6h12v12H0z" fill="#185abd"/><text x="1" y="15" fill="#fff">W</text></svg></button>
  <button class="app run front d-flex align-items-center justify-content-center" aria-label="Excel"><svg width="24" height="24" font-size="11" font-weight="700"><path d="M6 1h9v6H6z" fill="#21a366"/><path d="M15 1h9v6h-9z" fill="#33c481"/><path d="M6 7h9v10H6z" fill="#107c41"/><path d="M15 7h9v5h-9z" fill="#21a366"/><path d="M15 12h9v5h-9z" fill="#107c41"/><path d="M6 17h18v5H6z" fill="#185c37"/><path d="M0 6h12v12H0z" fill="#107c41"/><text x="2" y="16" fill="#fff">X</text></svg></button>
  <div class="ms-auto d-flex align-items-center">
    <svg width="22" height="22"><circle cx="11" cy="11" r="10.500" fill="#fff"/><circle cx="11" cy="11" r="9" fill="#1793d1"/><text x="6" y="17" font-size="17" font-weight="700" fill="#fff">?</text><circle cx="18" cy="17" r="4.500" fill="#1173b8"/><path d="M17.500 14h1.500v1.500h-1.500zM17.500 16.500h1.500v3h-1.500z" fill="#fff"/></svg>
    <svg class="ms-2 me-2" width="12" height="7"><path class="ln" d="M.500 6.500L6 1l5.500 5.500" stroke-width="1.300"/></svg>
    <svg class="me-2" width="17" height="14"><path d="M3 10a3 3 0 0 1 0-6c1-4 7-4 8-1 3 0 4 3 4 7z" fill="#b0b0b0"/><circle cx="12" cy="9.500" r="4.500" fill="#d9202a"/><path d="M10 7.500l4 4M14 7.500l-4 4" stroke="#fff" stroke-width="1.300"/></svg>
    <svg class="me-2" width="17" height="12"><path class="ln" d="M5.500 3.500h9v7h-9M15.500 5v4M2 0v3M4.500 0v3M.500 3.500h5v2l-2 1.500-2-1.500zM3.500 7v3.500h2"/><path d="M7 5h6v4H7z" fill="#fff"/></svg>
    <svg class="me-2" width="14" height="13"><path class="ln" d="M1 12A11 11 0 0 1 12 1M4 12a8 8 0 0 1 8-8M7 12a5 5 0 0 1 5-5"/><circle cx="11" cy="11.500" r="1.500" fill="#fff"/></svg>
    <svg width="17" height="13"><path class="ln" d="M.500 4.500h3l3-3v10l-3-3h-3zM9 4.500q1.500 2 0 4M11.500 2.500q3 4 0 8M14 .500q4.500 6 0 12"/></svg>
    <div class="clock ms-1">9:28 PM<br>10/28/2020</div>
    <svg class="ms-2 me-3" width="28" height="26"><path d="M3 3h16v14h-9l-4 4v-4H3z" fill="#fff"/><path d="M6 7.500h10M6 10.500h10M6 13.500h7" stroke="#2a2a2a"/><circle cx="18" cy="18" r="7.500" fill="#333" stroke="#999"/><text x="15" y="22" font-size="12" fill="#fff">1</text></svg>
  </div>
</nav>
<script src="https://cdn.jsdelivr.net/npm/bootstrap@5.3.0/dist/js/bootstrap.bundle.min.js"></script>
</body>
</html>
